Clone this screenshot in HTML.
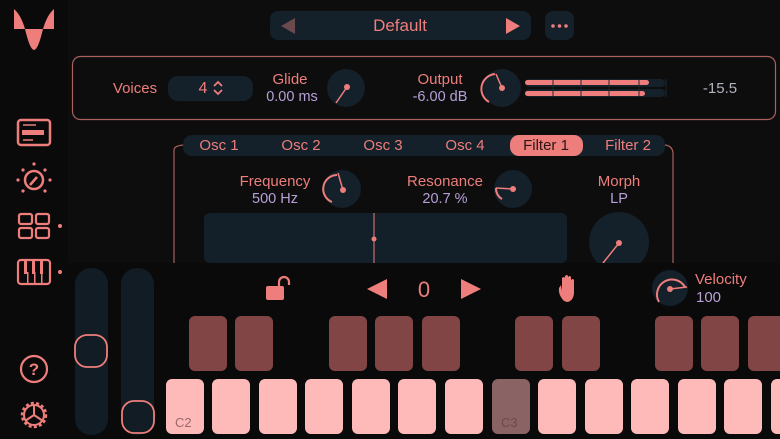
<!DOCTYPE html><html><head><meta charset="utf-8"><style>
body{margin:0;width:780px;height:439px;background:#0d0d0e;overflow:hidden;position:relative;font-family:"Liberation Sans",sans-serif}
.a{position:absolute}
.t{position:absolute;transform:translateX(-50%);white-space:nowrap;color:#ee7e7b;font-size:15px}
.v{color:#b7a0d6;font-size:14.5px}
.bk{position:absolute;top:316px;width:38px;height:55px;background:#824545;border-radius:6px}
.wk{position:absolute;top:379px;width:38px;height:55px;background:#feb9b9;border-radius:6px}
</style></head><body>
<div class="a" style="left:0;top:0;width:68px;height:439px;background:#0a0a0b"></div>
<svg class="a" style="left:0;top:0" width="780" height="439">
<!-- logo -->
<g fill="#ee7e7b">
<path d="M14 9 Q21 15 25 29 L14 29 Z"/>
<path d="M25 29 L43 29 Q38 50 34 50 Q30 50 25 29 Z"/>
<path d="M54 9 Q47 15 43 29 L54 29 Z"/>
</g>
<!-- sidebar icons -->
<rect x="18" y="120" width="32" height="25" rx="3" fill="none" stroke="#ee7e7b" stroke-width="2.5"/>
<rect x="22" y="130" width="22" height="5" fill="#ee7e7b"/><line x1="23" y1="125" x2="36" y2="125" stroke="#ee7e7b" stroke-width="1.5"/><line x1="23" y1="140" x2="33" y2="140" stroke="#ee7e7b" stroke-width="1.5"/>
<circle cx="34" cy="180" r="9" fill="none" stroke="#ee7e7b" stroke-width="2.5"/><line x1="30" y1="185" x2="37" y2="177" stroke="#ee7e7b" stroke-width="2.5"/>
<g fill="#ee7e7b"><circle cx="34" cy="164" r="1.6"/><circle cx="45" cy="170" r="1.6"/><circle cx="23" cy="170" r="1.6"/><circle cx="50" cy="180" r="1.6"/><circle cx="18" cy="180" r="1.6"/><circle cx="45" cy="191" r="1.6"/><circle cx="23" cy="191" r="1.6"/></g>
<g fill="none" stroke="#ee7e7b" stroke-width="2.2"><rect x="19" y="214" width="13" height="10" rx="2"/><rect x="36" y="214" width="13" height="10" rx="2"/><rect x="19" y="228" width="13" height="10" rx="2"/><rect x="36" y="228" width="13" height="10" rx="2"/>
<rect x="18" y="260" width="32" height="24" rx="3"/></g>
<g fill="#ee7e7b"><rect x="24" y="260" width="3" height="14"/><rect x="32" y="260" width="3" height="14"/><rect x="40" y="260" width="3" height="14"/><rect x="27" y="272" width="1.5" height="12"/><rect x="34" y="272" width="1.5" height="12"/><rect x="41" y="272" width="1.5" height="12"/>
<circle cx="60" cy="226" r="2"/><circle cx="60" cy="272" r="2"/></g>
<circle cx="34" cy="369" r="13" fill="none" stroke="#ee7e7b" stroke-width="2.2"/>
<text x="34" y="375" fill="#ee7e7b" font-size="17" font-weight="bold" text-anchor="middle" font-family="Liberation Sans">?</text>
<circle cx="34" cy="415" r="12" fill="none" stroke="#ee7e7b" stroke-width="2.5" stroke-dasharray="3 2.3"/>
<circle cx="34" cy="415" r="10" fill="none" stroke="#ee7e7b" stroke-width="2"/>
<g stroke="#ee7e7b" stroke-width="2"><line x1="34" y1="415" x2="34" y2="405"/><line x1="34" y1="415" x2="25" y2="421"/><line x1="34" y1="415" x2="43" y2="421"/></g>
<!-- preset bar -->
<rect x="270" y="11" width="261" height="29" rx="8" fill="#14202a"/>
<path d="M281 26 L295 18 L295 34Z" fill="#6b4a4d"/><path d="M520 26 L506 18 L506 34Z" fill="#ee7e7b"/>
<rect x="545" y="11" width="29" height="29" rx="8" fill="#14202a"/>
<g fill="#ee7e7b"><circle cx="553" cy="26" r="1.8"/><circle cx="559.5" cy="26" r="1.8"/><circle cx="566" cy="26" r="1.8"/></g>
<!-- top panel -->
<rect x="72.5" y="56.5" width="703" height="63" rx="8" fill="none" stroke="#a9605f" stroke-width="1.2"/>
<rect x="168" y="76" width="85" height="25" rx="10" fill="#14202a"/>
<path d="M214 86 L218 82 L222 86 M214 90 L218 94 L222 90" fill="none" stroke="#ee7e7b" stroke-width="1.8"/>
<circle cx="346" cy="88" r="19" fill="#14202a"/><line x1="336" y1="103" x2="347" y2="87" stroke="#ee7e7b" stroke-width="1.5"/><circle cx="347" cy="87" r="3" fill="#ee7e7b"/>
<circle cx="502" cy="88" r="19" fill="#14202a"/><path d="M489 102 A15 15 0 0 1 495 74" fill="none" stroke="#ee7e7b" stroke-width="2"/><line x1="496" y1="74" x2="502" y2="88" stroke="#ee7e7b" stroke-width="1.5"/><circle cx="502" cy="88" r="3" fill="#ee7e7b"/>
<rect x="525" y="79" width="140" height="8" rx="4" fill="#14202a"/><rect x="525" y="89" width="140" height="8" rx="4" fill="#14202a"/>
<rect x="525" y="80" width="124" height="5" rx="2.5" fill="#ee7e7b"/><rect x="525" y="91" width="120" height="5" rx="2.5" fill="#ee7e7b"/>
<g stroke="#1f2830"><line x1="553" y1="79" x2="553" y2="97"/><line x1="581" y1="79" x2="581" y2="97"/><line x1="609" y1="79" x2="609" y2="97"/><line x1="639" y1="79" x2="639" y2="97"/><line x1="666" y1="79" x2="666" y2="97"/></g>
<!-- tabs -->
<rect x="183" y="135" width="482" height="21" rx="9" fill="#14202a"/>
<rect x="510" y="135" width="73" height="21" rx="9" fill="#ee7e7b"/>
<path d="M174 263 L174 150 Q174 146 183 145" fill="none" stroke="#a9605f" stroke-width="1.2"/>
<path d="M673 263 L673 154 Q673 146 665 145" fill="none" stroke="#a9605f" stroke-width="1.2"/>
<!-- filter knobs -->
<circle cx="342" cy="189" r="19" fill="#14202a"/><path d="M332 202 A14 14 0 0 1 337 175" fill="none" stroke="#ee7e7b" stroke-width="2"/><line x1="338" y1="173" x2="343" y2="190" stroke="#ee7e7b" stroke-width="1.5"/><circle cx="343" cy="190" r="3" fill="#ee7e7b"/>
<circle cx="513" cy="189" r="19" fill="#14202a"/><path d="M502 199 A12 12 0 0 1 496 188" fill="none" stroke="#ee7e7b" stroke-width="2"/><line x1="496" y1="188" x2="513" y2="189" stroke="#ee7e7b" stroke-width="1.5"/><circle cx="513" cy="189" r="3" fill="#ee7e7b"/>
<rect x="204" y="213" width="363" height="50" rx="6" fill="#13202a"/>
<line x1="374" y1="213" x2="374" y2="263" stroke="#ee7e7b" stroke-width="1"/><circle cx="374" cy="239" r="2.5" fill="#ee7e7b"/>
<circle cx="619" cy="242" r="30" fill="#14202a"/><line x1="603" y1="263" x2="619" y2="243" stroke="#ee7e7b" stroke-width="1.5"/><circle cx="619" cy="243" r="3" fill="#ee7e7b"/>
<!-- keyboard area -->
<rect x="68" y="263" width="712" height="176" fill="#0a0a0b"/>
<rect x="75" y="268" width="33" height="167" rx="16" fill="#111c24"/><rect x="121" y="268" width="33" height="167" rx="16" fill="#111c24"/>
<rect x="75" y="335" width="32" height="32" rx="12" fill="none" stroke="#ee7e7b" stroke-width="1.8"/>
<rect x="122" y="401" width="32" height="32" rx="12" fill="none" stroke="#ee7e7b" stroke-width="1.8"/>
<rect x="266" y="286" width="18" height="14" rx="2" fill="#ee7e7b"/><path d="M279 287 L279 282 A5 5 0 0 1 289 282 L289 285" fill="none" stroke="#ee7e7b" stroke-width="2.2"/>
<path d="M367 289 L387 279 L387 299Z" fill="#ee7e7b"/><path d="M481 289 L461 279 L461 299Z" fill="#ee7e7b"/>
<path d="M563 300 Q558 294 559 288 L561 285 L562 291 L562 278 Q564 276 565 278 L565 288 L565 276 Q567 274 568 276 L568 288 L568 277 Q570 275 571 277 L571 288 L571 280 Q573 278 574 280 L574 292 Q574 300 568 302 Q565 302 563 300Z" fill="#ee7e7b"/>
<circle cx="670" cy="288" r="18" fill="#14202a"/><path d="M659 302 A15 15 0 1 1 685 287" fill="none" stroke="#ee7e7b" stroke-width="2"/><line x1="670" y1="289" x2="687" y2="287" stroke="#ee7e7b" stroke-width="1.5"/><circle cx="670" cy="289" r="3" fill="#ee7e7b"/>
</svg>
<div class="t" style="left:400px;top:16px;font-size:17px">Default</div>
<div class="t" style="left:135px;top:80px">Voices</div>
<div class="t" style="left:203px;top:80px;font-size:16px">4</div>
<div class="t" style="left:290px;top:71px">Glide</div>
<div class="t v" style="left:292px;top:89px">0.00 ms</div>
<div class="t" style="left:440px;top:71px">Output</div>
<div class="t v" style="left:440px;top:89px">-6.00 dB</div>
<div class="t" style="left:720px;top:80px;color:#b0b4bc;font-size:15px">-15.5</div>
<div class="t" style="left:219px;top:137px">Osc 1</div>
<div class="t" style="left:301px;top:137px">Osc 2</div>
<div class="t" style="left:383px;top:137px">Osc 3</div>
<div class="t" style="left:465px;top:137px">Osc 4</div>
<div class="t" style="left:546px;top:137px;color:#2a1515">Filter 1</div>
<div class="t" style="left:628px;top:137px">Filter 2</div>
<div class="t" style="left:275px;top:173px">Frequency</div>
<div class="t v" style="left:275px;top:191px">500 Hz</div>
<div class="t" style="left:445px;top:173px">Resonance</div>
<div class="t v" style="left:445px;top:191px">20.7 %</div>
<div class="t" style="left:619px;top:173px">Morph</div>
<div class="t v" style="left:619px;top:191px">LP</div>
<div class="t" style="left:424px;top:277px;font-size:22px">0</div>
<div class="a" style="left:695px;top:271px;color:#ee7e7b;font-size:15px">Velocity</div>
<div class="a v" style="left:696px;top:289px;font-size:15px">100</div>
<div class="bk" style="left:189px"></div><div class="bk" style="left:235px"></div>
<div class="bk" style="left:329px"></div><div class="bk" style="left:375px"></div><div class="bk" style="left:422px"></div>
<div class="bk" style="left:515px"></div><div class="bk" style="left:562px"></div>
<div class="bk" style="left:655px"></div><div class="bk" style="left:701px"></div><div class="bk" style="left:748px"></div>
<div class="wk" style="left:166px"><span class="a" style="left:9px;bottom:4px;color:#9b6868;font-size:13px">C2</span></div>
<div class="wk" style="left:212px"></div><div class="wk" style="left:259px"></div><div class="wk" style="left:305px"></div>
<div class="wk" style="left:352px"></div><div class="wk" style="left:398px"></div><div class="wk" style="left:445px"></div>
<div class="wk" style="left:492px;background:#8a6464"><span class="a" style="left:9px;bottom:4px;color:#6e4a4a;font-size:13px">C3</span></div>
<div class="wk" style="left:538px"></div><div class="wk" style="left:585px"></div><div class="wk" style="left:631px"></div>
<div class="wk" style="left:678px"></div><div class="wk" style="left:724px"></div><div class="wk" style="left:771px"></div>
</body></html>
